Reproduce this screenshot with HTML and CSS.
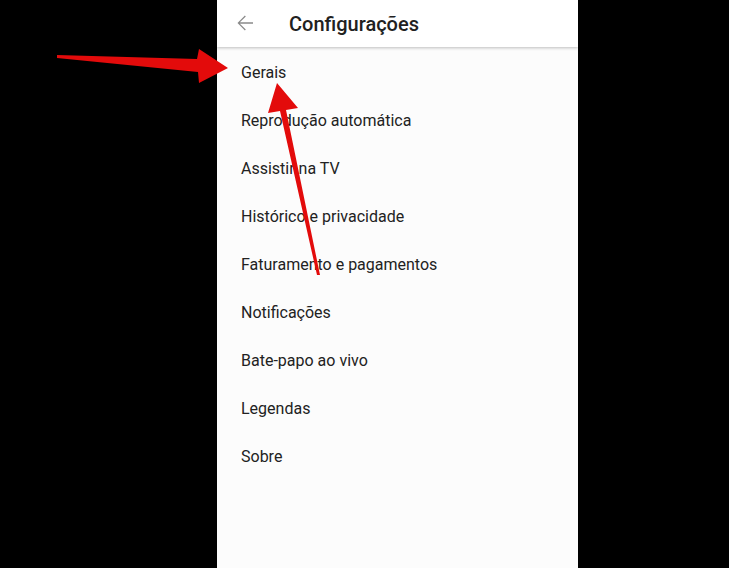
FILE: index.html
```html
<!DOCTYPE html>
<html lang="pt">
  <head>
    <meta charset="UTF-8" />
    <meta name="viewport" content="width=device-width, initial-scale=1.0" />
    <title>Configurações</title>
    <link rel="stylesheet" href="styles.css">
  </head>
  <body>
    <div class="screen">
      <header class="top-bar">
        <button class="back-button" aria-label="Voltar">
          <svg width="24" height="24" viewBox="0 0 24 24">
            <path d="M20 11.3H6.9l5.9-5.9-0.9-0.9L4.5 12l7.4 7.5 0.9-0.9-5.9-5.9H20z" fill="#8a8a8a"/>
          </svg>
        </button>
        <h1>Configurações</h1>
      </header>
      <ul class="settings-list">
        <li>Gerais</li>
        <li>Reprodução automática</li>
        <li>Assistir na TV</li>
        <li>Histórico e privacidade</li>
        <li>Faturamento e pagamentos</li>
        <li>Notificações</li>
        <li>Bate-papo ao vivo</li>
        <li>Legendas</li>
        <li>Sobre</li>
      </ul>
    </div>

    <!-- Red annotation arrows drawn over the screenshot -->
    <svg class="annotations" width="729" height="568" viewBox="0 0 729 568">
      <polygon fill="#e30b0b" points="57,55 197,59 199,49 228,68 199,83 198,72 57,58"/>
      <polygon fill="#e30b0b" points="320,275 286,110 298,108 277,83 268,113 280,111 317,275"/>
    </svg>
  </body>
</html>
```

FILE: styles.css
```css
* {
  margin: 0;
  padding: 0;
  box-sizing: border-box;
}

body {
  background-color: #000;
  font-family: Roboto, "Liberation Sans", Arial, sans-serif;
  width: 729px;
  height: 568px;
  overflow: hidden;
  position: relative;
}

.screen {
  margin-left: 217px;
  width: 361px;
  height: 568px;
  background-color: #fcfcfc;
}

/* Header bar */
.top-bar {
  height: 47px;
  display: flex;
  align-items: center;
  background-color: #fff;
  box-shadow: 0 1px 3px rgba(0, 0, 0, 0.25);
  position: relative;
  z-index: 1;
}

.back-button {
  width: 56px;
  height: 47px;
  padding-left: 16px;
  padding-bottom: 2px;
  display: flex;
  align-items: center;
  background: none;
  border: none;
}

.top-bar h1 {
  margin-left: 16px;
  font-size: 20px;
  font-weight: 500;
  color: #212121;
}

/* Settings list */
.settings-list {
  list-style: none;
  padding-top: 1px;
}

.settings-list li {
  height: 48px;
  display: flex;
  align-items: center;
  padding-left: 24px;
  font-size: 16px;
  color: #222;
}

.annotations {
  position: absolute;
  top: 0;
  left: 0;
}
```
